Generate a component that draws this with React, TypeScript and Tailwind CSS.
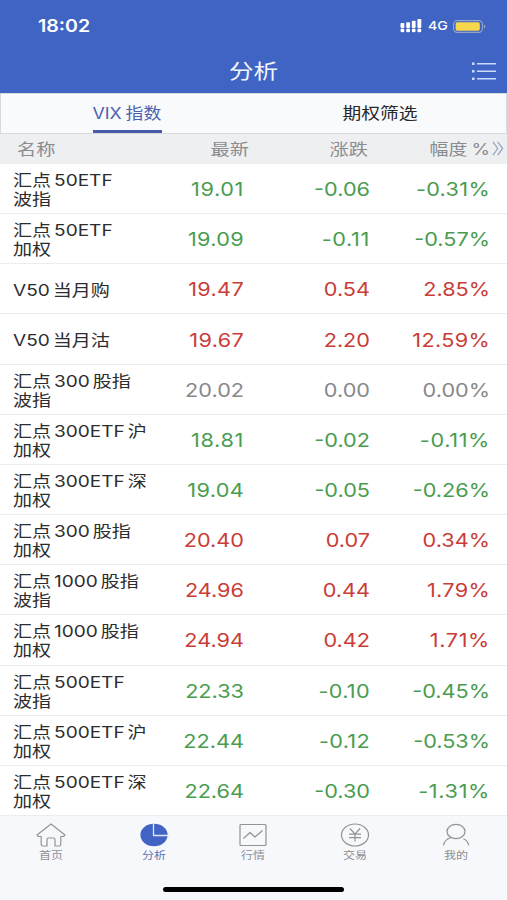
import type { ReactNode } from 'react';

type Tone = 'up' | 'down' | 'flat';
type Quote = { name: string[]; last: string; change: string; percent: string; tone: Tone };

const tones: Record<Tone, string> = {
  up: 'text-[#c93d38]',
  down: 'text-[#4a9c50]',
  flat: 'text-[#88898b]',
};

const quotes: Quote[] = [
  { name: ['汇点 50ETF', '波指'], last: '19.01', change: '-0.06', percent: '-0.31%', tone: 'down' },
  { name: ['汇点 50ETF', '加权'], last: '19.09', change: '-0.11', percent: '-0.57%', tone: 'down' },
  { name: ['V50 当月购'], last: '19.47', change: '0.54', percent: '2.85%', tone: 'up' },
  { name: ['V50 当月沽'], last: '19.67', change: '2.20', percent: '12.59%', tone: 'up' },
  { name: ['汇点 300 股指', '波指'], last: '20.02', change: '0.00', percent: '0.00%', tone: 'flat' },
  { name: ['汇点 300ETF 沪', '加权'], last: '18.81', change: '-0.02', percent: '-0.11%', tone: 'down' },
  { name: ['汇点 300ETF 深', '加权'], last: '19.04', change: '-0.05', percent: '-0.26%', tone: 'down' },
  { name: ['汇点 300 股指', '加权'], last: '20.40', change: '0.07', percent: '0.34%', tone: 'up' },
  { name: ['汇点 1000 股指', '波指'], last: '24.96', change: '0.44', percent: '1.79%', tone: 'up' },
  { name: ['汇点 1000 股指', '加权'], last: '24.94', change: '0.42', percent: '1.71%', tone: 'up' },
  { name: ['汇点 500ETF', '波指'], last: '22.33', change: '-0.10', percent: '-0.45%', tone: 'down' },
  { name: ['汇点 500ETF 沪', '加权'], last: '22.44', change: '-0.12', percent: '-0.53%', tone: 'down' },
  { name: ['汇点 500ETF 深', '加权'], last: '22.64', change: '-0.30', percent: '-1.31%', tone: 'down' },
];

function StatusBar() {
  return (
    <div className="flex h-[50px] items-center justify-between pt-[2px] pr-[21px] pl-[38px] text-white">
      <span className="origin-left scale-x-[1.15] text-[17px] leading-none font-semibold">18:02</span>
      <div className="flex items-center">
        <svg width="22" height="14" viewBox="0 0 22 14" fill="#fff">
          <rect x="0.500" y="4" width="3.800" height="5" rx="1" />
          <rect x="6.200" y="3.200" width="3.800" height="5.800" rx="1" />
          <rect x="11.800" y="1.800" width="3.800" height="7.200" rx="1" />
          <rect x="17.400" y="0" width="3.900" height="9" rx="1" />
          <rect x="0.500" y="9.600" width="3.800" height="3.600" rx="1.500" />
          <rect x="6.200" y="9.600" width="3.800" height="3.600" rx="1.500" />
          <rect x="11.800" y="9.600" width="3.800" height="3.600" rx="1.500" />
          <rect x="17.400" y="9.600" width="3.900" height="3.600" rx="1.500" />
        </svg>
        <span className="ml-[6px] w-[19px] origin-left scale-x-[1.18] text-[12px] leading-none font-medium">4G</span>
        <svg className="ml-[6px]" width="33" height="13" viewBox="0 0 33 13" fill="none">
          <rect x="0.6" y="0.6" width="28.8" height="11.8" rx="3.6" stroke="#94a5c9" strokeWidth="1.1" />
          <rect x="2.6" y="2.2" width="24.2" height="8.6" rx="1.8" fill="#f6d64c" />
          <path d="M31 4.300c1.800.7 1.800 3.700 0 4.400z" fill="#94a5c9" />
        </svg>
      </div>
    </div>
  );
}

function TitleBar() {
  return (
    <div className="grid h-[43px] grid-cols-[1fr_auto_1fr] items-center text-[#f1f5fc]">
      <span />
      <h1 className="scale-x-[1.2] pt-px text-[20.5px] leading-none">分析</h1>
      <svg className="mr-[10px] justify-self-end" width="26" height="20" viewBox="0 0 26 20" stroke="#c9dcfb" strokeWidth="1.4">
        <path d="M6 1.700H25M6 9.200H25M6 16.700H25" />
        <path d="M1 1.700h2.600M1 9.200h2.600M1 16.700h2.600" strokeWidth="2.400" />
      </svg>
    </div>
  );
}

function Tabs() {
  return (
    <div className="grid h-[41px] grid-cols-2 border border-[#d6dade] bg-[#f8fafc] text-[16px] leading-none">
      <div className="flex justify-center">
        <div className="flex w-[69px] items-center justify-center border-b-[3px] border-[#4559a6] pt-[3px] text-[#4c61ad]">
          <span className="origin-center scale-x-[1.15] text-[15.5px] whitespace-nowrap [word-spacing:-1px]">VIX 指数</span>
        </div>
      </div>
      <div className="flex items-center justify-center pb-px text-[#27282a]">
        <span className="scale-x-[1.17]">期权筛选</span>
      </div>
    </div>
  );
}

const columns = 'grid grid-cols-[170px_74px_126px_120px] items-center';

function ColumnHeads() {
  return (
    <div className="flex h-[30px] items-center bg-[#eeeff1] text-[16px] leading-none text-[#898b8f]">
      <div className={columns}>
        <span className="ml-[17px] origin-left scale-x-[1.2]">名称</span>
        <span className="mr-[-5px] origin-right scale-x-[1.2] text-right">最新</span>
        <span className="mr-[2px] origin-right scale-x-[1.2] text-right">涨跌</span>
        <span className="origin-right scale-x-[1.18] text-right whitespace-nowrap [word-spacing:-1px]">幅度 %</span>
      </div>
      <svg className="ml-[2px]" width="12" height="16" viewBox="0 0 12 16" fill="none" stroke="#9ba5c7" strokeWidth="1.3">
        <path d="M1 0.800L5.700 7.500L1 14.200M5.700 0.800L10.600 7.500L5.700 14.200" />
      </svg>
    </div>
  );
}

function Figure({ value }: { value: string }) {
  // The digit 1 is narrow, so figures holding it get slightly looser tracking.
  const ones = value.split('1').length - 1;
  return (
    <span
      className="block origin-right scale-x-[1.14] text-right text-[19px] leading-none"
      style={{ letterSpacing: `${ones * 0.28}px` }}
    >
      {value}
    </span>
  );
}

function QuoteRow({ quote }: { quote: Quote }) {
  return (
    <li className={`${columns} ${tones[quote.tone]} min-h-0 flex-1 border-b border-[#ebecee] pt-[2px]`}>
      <div className="ml-[13px] origin-left scale-x-[1.19] pt-px text-[16px] leading-[19px] whitespace-nowrap text-[#2c2d2f] [word-spacing:-2px]">
        {quote.name.map((line) => (
          <div key={line}>{line}</div>
        ))}
      </div>
      <Figure value={quote.last} />
      <Figure value={quote.change} />
      <Figure value={quote.percent} />
    </li>
  );
}

const navItems: { label: string; icon: ReactNode; active?: boolean }[] = [
  {
    label: '首页',
    icon: <path d="M1 12L15 1L29 12L27.500 13.500H24.800V21.500Q24.800 23 23.300 23H19V16.500Q19 15 17.500 15H12.500Q11 15 11 16.500V23H6.700Q5.200 23 5.200 21.500V13.500H2.500Z" />,
  },
  {
    label: '分析',
    active: true,
    icon: (
      <>
        <ellipse cx="15" cy="12" rx="13.6" ry="11.2" fill="#4164c4" stroke="none" />
        <path d="M14.500 0V12.500H30" stroke="#dce7fb" strokeWidth="1.3" />
      </>
    ),
  },
  {
    label: '行情',
    icon: (
      <>
        <rect x="2" y="1.5" width="26" height="21" rx="1" />
        <path d="M5.500 15.500L12 9.500L17 14L24.500 7.500" />
      </>
    ),
  },
  {
    label: '交易',
    icon: (
      <>
        <ellipse cx="15" cy="12" rx="13.5" ry="11" />
        <path d="M10 5.500L15 11.200L20 5.500M9 11.200H21M9 14.700H21M15 11.200V18.500" />
      </>
    ),
  },
  {
    label: '我的',
    icon: (
      <>
        <ellipse cx="15" cy="8.500" rx="9" ry="7.200" />
        <path d="M10 14.500C6 15.700 3.200 18.500 2.500 22.500M22.500 15.700C25.300 17 27.200 19.500 27.800 22.500" />
      </>
    ),
  },
];

function BottomNav() {
  return (
    <nav className="flex h-[84px] flex-col items-center bg-[#f7f8fb]">
      <div className="grid w-full grid-cols-5 pt-[7px]">
        {navItems.map((item) => (
          <div key={item.label} className={`flex flex-col items-center ${item.active ? 'pl-[4px]' : ''}`}>
            <svg width="30" height="24" viewBox="0 0 30 24" fill="none" stroke="#919396" strokeWidth="1.2" strokeLinejoin="round">
              {item.icon}
            </svg>
            <span className={`mt-[2px] scale-x-[1.2] text-[10px] leading-[12px] ${item.active ? 'text-[#5b76b6]' : 'text-[#8d8f93]'}`}>
              {item.label}
            </span>
          </div>
        ))}
      </div>
      <div className="mt-[26px] h-[5px] w-[181px] rounded-full bg-black" />
    </nav>
  );
}

export default function App() {
  return (
    <div className="flex h-[900px] w-[507px] flex-col overflow-hidden bg-white font-[Inter,'Noto_Sans_CJK_SC',sans-serif]">
      <header className="bg-[#4064c4]">
        <StatusBar />
        <TitleBar />
      </header>
      <Tabs />
      <ColumnHeads />
      <ul className="flex min-h-0 flex-1 flex-col">
        {quotes.map((quote) => (
          <QuoteRow key={quote.name.join('')} quote={quote} />
        ))}
      </ul>
      <BottomNav />
    </div>
  );
}
